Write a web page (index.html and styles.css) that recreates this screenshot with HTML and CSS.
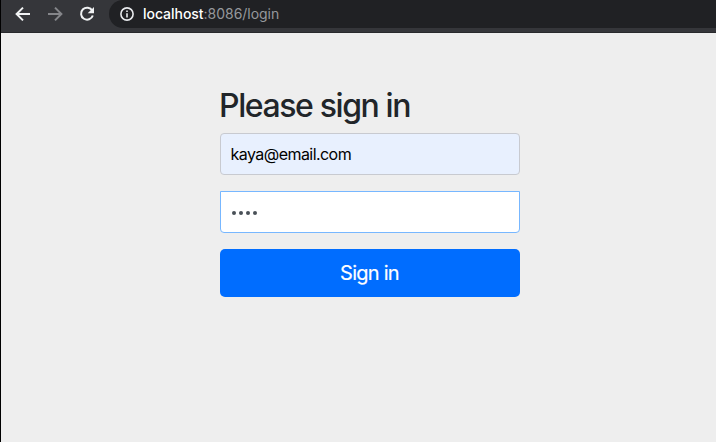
FILE: index.html
```html
<!DOCTYPE html>
<html lang="en">
<head>
<meta charset="utf-8">
<title>Please sign in</title>
<link rel="stylesheet" href="styles.css">
</head>
<body>
<header class="toolbar">
  <svg class="nav-icon back" viewBox="0 0 16 16"><path d="M15 8H2M8 1.6 1.6 8 8 14.4"/></svg>
  <svg class="nav-icon forward" viewBox="0 0 16 16"><path d="M1 8h13M8 1.6 14.4 8 8 14.4"/></svg>
  <svg class="nav-icon reload" viewBox="0 0 16 16"><path d="M13.3 4.7A6 6 0 1 0 13.8 9.5"/><path class="solid" d="M15 1v6.3H8.7z"/></svg>
  <div class="address">
    <svg class="info" viewBox="0 0 14 14"><circle cx="7" cy="7" r="6.1"/><path d="M7 6.2v4.2M7 3.5v1.6"/></svg>
    <span class="url"><span class="host">localhost</span>:8086/login</span>
  </div>
</header>
<main class="page">
  <form class="signin">
    <h2 class="title">Please sign in</h2>
    <input class="field email" type="text" value="kaya@email.com" aria-label="Username">
    <div class="field password" aria-label="Password"><i></i><i></i><i></i><i></i></div>
    <button class="submit" type="button">Sign in</button>
  </form>
</main>
</body>
</html>
```
FILE: styles.css
```css
* { box-sizing: border-box; }
body {
  margin: 0;
  height: 442px;
  overflow: hidden;
  border-left: 1px solid #000;
  background: #eee;
  font-family: Inter, "Liberation Sans", sans-serif;
}
.toolbar {
  display: flex;
  height: 33px;
  padding-left: 14px;
  background: #35363a;
  border-bottom: 1px solid #28292c;
}
.nav-icon {
  width: 16px;
  height: 16px;
  margin: 6px 16px 0 0;
  fill: none;
  stroke: #f1f3f4;
  stroke-width: 2;
}
.forward { stroke: #85868a; }
.reload { margin-right: 14px; }
.solid { fill: #f1f3f4; stroke: none; }
.address {
  flex: 1;
  display: flex;
  align-items: center;
  height: 28px;
  padding-left: 11px;
  border-radius: 14px 0 0 14px;
  background: #202124;
}
.info {
  width: 14px;
  height: 14px;
  margin-right: 9px;
  fill: none;
  stroke: #e8eaed;
  stroke-width: 1.6;
}
.url {
  padding-bottom: 2px;
  color: #96989c;
  font-size: 14px;
  letter-spacing: -0.03px;
}
.host { color: #fff; font-weight: 500; }
.page { padding: 53px 0 0 219px; }
.signin { width: 300px; }
.title {
  margin: 0 0 8px -1px;
  color: #212529;
  font-size: 32px;
  font-weight: 550;
  line-height: 39px;
  letter-spacing: -1.4px;
  white-space: nowrap;
}
.field {
  display: flex;
  width: 300px;
  height: 42px;
  padding: 0 9.5px;
  border: 1px solid #c8cad0;
  border-radius: 4px;
  outline: none;
}
.email {
  background: #e8f0fe;
  color: #000;
  font: 16px Inter, sans-serif;
  letter-spacing: -0.55px;
}
.password {
  align-items: center;
  gap: 2.4px;
  margin: 16px 0;
  padding: 2px 10.6px 0;
  border-color: #77b7ff;
  border-radius: 0 0 4px 4px;
  background: #fff;
}
.password i {
  width: 4.6px;
  height: 4.6px;
  border-radius: 50%;
  background: #495057;
}
.submit {
  display: block;
  width: 300px;
  height: 48px;
  padding: 0 1px 0 0;
  border: 0;
  border-radius: 5px;
  background: #006dff;
  color: #fff;
  font: 20px Inter, sans-serif;
  letter-spacing: -0.75px;
  -webkit-text-stroke: 0.2px #fff;
}
```
